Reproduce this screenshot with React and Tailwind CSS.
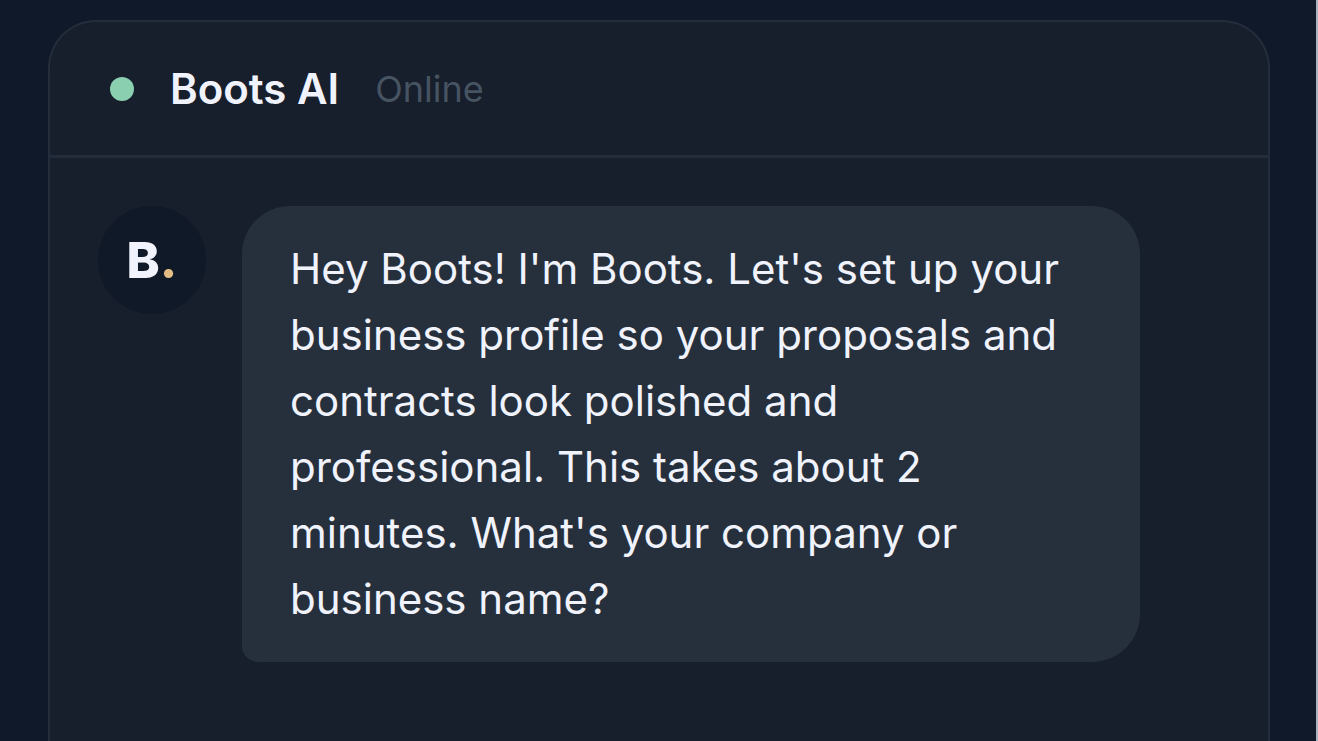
import React from 'react';

const messages = [
  {
    id: 1,
    text: "Hey Boots! I'm Boots. Let's set up your business profile so your proposals and contracts look polished and professional. This takes about 2 minutes. What's your company or business name?",
  },
];

function ChatHeader({ name, status }) {
  return (
    <header className="flex items-center border-b-3 border-[#222c3a] px-15 h-[136px]">
      <span className="size-6 rounded-full bg-[#8bcfb1]" />
      <h1 className="ml-9 text-[42px] leading-[50px] font-semibold text-[#f0f3fc]">{name}</h1>
      <span className="ml-9 text-[36px] leading-[50px] text-[#465361]">{status}</span>
    </header>
  );
}

function Avatar() {
  return (
    <div className="flex size-[108px] shrink-0 items-center justify-center rounded-full bg-[#101928] text-[50px] font-extrabold text-[#f0f3fc]">
      <span>B<span className="text-[#e4bd85]">.</span></span>
    </div>
  );
}

function ChatMessage({ text }) {
  return (
    <div className="flex items-start gap-9">
      <Avatar />
      <p className="max-w-[898px] rounded-[48px] rounded-bl-2xl bg-[#26303d] px-12 py-[30px] text-[42px] leading-[66px] text-[#f0f3fc]">
        {text}
      </p>
    </div>
  );
}

export default function App() {
  return (
    <div className="min-h-screen bg-[#101929] border-r-2 border-[#a9b3c0] pt-5 pr-[46px] pl-12 font-['Inter',sans-serif] flex flex-col">
      <main className="flex-1 rounded-t-[48px] border-2 border-b-0 border-[#232d3b] bg-[#171e2c]">
        <ChatHeader name="Boots AI" status="Online" />
        <div className="px-12 py-12">
          {messages.map(message => (
            <ChatMessage key={message.id} text={message.text} />
          ))}
        </div>
      </main>
    </div>
  );
}
